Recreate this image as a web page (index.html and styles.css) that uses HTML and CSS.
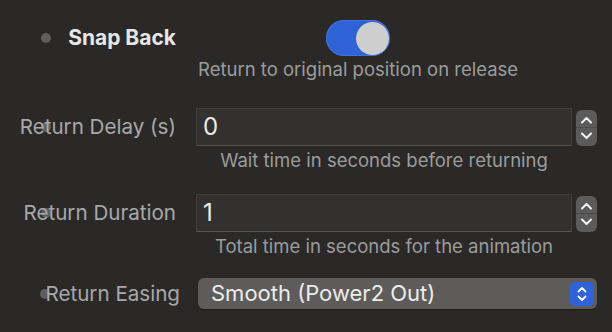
FILE: index.html
```html
<!DOCTYPE html>
<html>
<head>
<meta charset="utf-8">
<link rel="stylesheet" href="styles.css">
</head>
<body>
<div class="panel">
  <div class="label label-bold row-snap"><span class="dot"></span><span class="text">Snap Back</span></div>
  <div class="control row-snap">
    <div class="toggle-block">
      <div class="toggle"><div class="knob"></div></div>
      <div class="hint hint-toggle">Return to original position on release</div>
    </div>
  </div>

  <div class="label label-input row-delay"><span class="dot"></span><span class="text">Return Delay (s)</span></div>
  <div class="control row-delay">
    <div class="field-line">
      <div class="input">0</div>
      <div class="stepper">
        <svg width="21" height="36" viewBox="0 0 21 36">
          <line x1="0" y1="17.5" x2="21" y2="17.5" stroke="#4a4a4a" stroke-width="1"/>
          <path d="M6 12.5 L10.5 8 L15 12.5" fill="none" stroke="#f2f2f2" stroke-width="2" stroke-linecap="round" stroke-linejoin="round"/>
          <path d="M6 23.5 L10.5 28 L15 23.5" fill="none" stroke="#f2f2f2" stroke-width="2" stroke-linecap="round" stroke-linejoin="round"/>
        </svg>
      </div>
    </div>
    <div class="hint hint-input">Wait time in seconds before returning</div>
  </div>

  <div class="label label-input row-duration"><span class="dot"></span><span class="text">Return Duration</span></div>
  <div class="control row-duration">
    <div class="field-line">
      <div class="input">1</div>
      <div class="stepper">
        <svg width="21" height="36" viewBox="0 0 21 36">
          <line x1="0" y1="17.5" x2="21" y2="17.5" stroke="#4a4a4a" stroke-width="1"/>
          <path d="M6 12.5 L10.5 8 L15 12.5" fill="none" stroke="#f2f2f2" stroke-width="2" stroke-linecap="round" stroke-linejoin="round"/>
          <path d="M6 23.5 L10.5 28 L15 23.5" fill="none" stroke="#f2f2f2" stroke-width="2" stroke-linecap="round" stroke-linejoin="round"/>
        </svg>
      </div>
    </div>
    <div class="hint hint-input">Total time in seconds for the animation</div>
  </div>

  <div class="label label-easing row-easing"><span class="dot"></span><span class="text">Return Easing</span></div>
  <div class="control row-easing">
    <div class="select">
      <span class="select-text">Smooth (Power2 Out)</span>
      <span class="select-btn">
        <svg width="24" height="24" viewBox="0 0 24 24">
          <path d="M8.5 9.5 L12 6 L15.5 9.5" fill="none" stroke="#ffffff" stroke-width="1.8" stroke-linecap="round" stroke-linejoin="round"/>
          <path d="M8.5 14.5 L12 18 L15.5 14.5" fill="none" stroke="#ffffff" stroke-width="1.8" stroke-linecap="round" stroke-linejoin="round"/>
        </svg>
      </span>
    </div>
  </div>
</div>
</body>
</html>
```

FILE: styles.css
```css
html, body {
  margin: 0;
  padding: 0;
  background: #2a2928;
  width: 612px;
  height: 332px;
  overflow: hidden;
}

body {
  font-family: "Inter", "Roboto", "Liberation Sans", sans-serif;
  color: #a8a8a8;
}

.panel {
  display: grid;
  grid-template-columns: 176px 401px;
  column-gap: 20px;
  padding-top: 20px;
}

.label {
  position: relative;
  align-self: start;
  display: flex;
  justify-content: flex-end;
  align-items: center;
  font-size: 20.6px;
  line-height: 24px;
  color: #a8a8a8;
  white-space: nowrap;
}

.label .text {
  position: relative;
  z-index: 1;
}

.dot {
  position: absolute;
  left: 41px;
  top: 50%;
  margin-top: -5px;
  width: 10px;
  height: 10px;
  border-radius: 50%;
  background: #5e5e5e;
  z-index: 0;
}

.label-bold {
  height: 36px;
  font-size: 21px;
  font-weight: 700;
  color: #e6e6e6;
}

.label-input {
  height: 38px;
}

.label-easing {
  height: 31px;
}
.label-easing .text { margin-right: -4px; }
.label-easing .dot { left: 40px; }

.row-delay { margin-top: 28px; }
.row-duration { margin-top: 23px; }
.row-easing { margin-top: 21px; }

.control {
  display: flex;
  flex-direction: column;
  align-items: flex-start;
}

.toggle-block {
  display: inline-flex;
  flex-direction: column;
  align-items: center;
  margin-left: 2px;
}

.toggle {
  width: 64px;
  height: 36px;
  border-radius: 18px;
  background: #2f62d5;
  display: flex;
  align-items: center;
  justify-content: flex-end;
  padding: 0 1px;
  box-sizing: border-box;
  box-shadow: inset 0 0 0 1px rgba(90, 130, 230, 0.5);
}

.knob {
  width: 33px;
  height: 33px;
  border-radius: 50%;
  background: #cecece;
}

.hint {
  font-size: 18.5px;
  line-height: 22px;
  color: #9c9c9c;
  white-space: nowrap;
}

.hint-toggle { margin-top: 2px; }

.field-line {
  display: flex;
  align-items: center;
  gap: 4px;
}

.input {
  width: 376px;
  height: 38px;
  box-sizing: border-box;
  background: #323130;
  border: 1px solid #3f3e3d;
  border-bottom-color: #565554;
  font-size: 24px;
  line-height: 36px;
  color: #ececec;
  padding-left: 6px;
}

.stepper {
  width: 21px;
  height: 36px;
  border-radius: 6px;
  background: #5b5b5b;
  display: flex;
  margin-top: 2px;
}

.hint-input {
  width: 376px;
  text-align: center;
  margin-top: 3px;
}

.select {
  margin-left: 2px;
  width: 399px;
  height: 31px;
  box-sizing: border-box;
  border-radius: 6px;
  background: #5d5c5b;
  display: flex;
  align-items: center;
  justify-content: space-between;
  padding: 0 3px 0 13px;
  box-shadow: 0 1px 1px rgba(0,0,0,0.3);
}

.select-text {
  font-size: 22px;
  line-height: 31px;
  color: #ececec;
}

.select-btn {
  width: 24px;
  height: 24px;
  border-radius: 5px;
  background: #2f62d8;
  display: flex;
}
```
